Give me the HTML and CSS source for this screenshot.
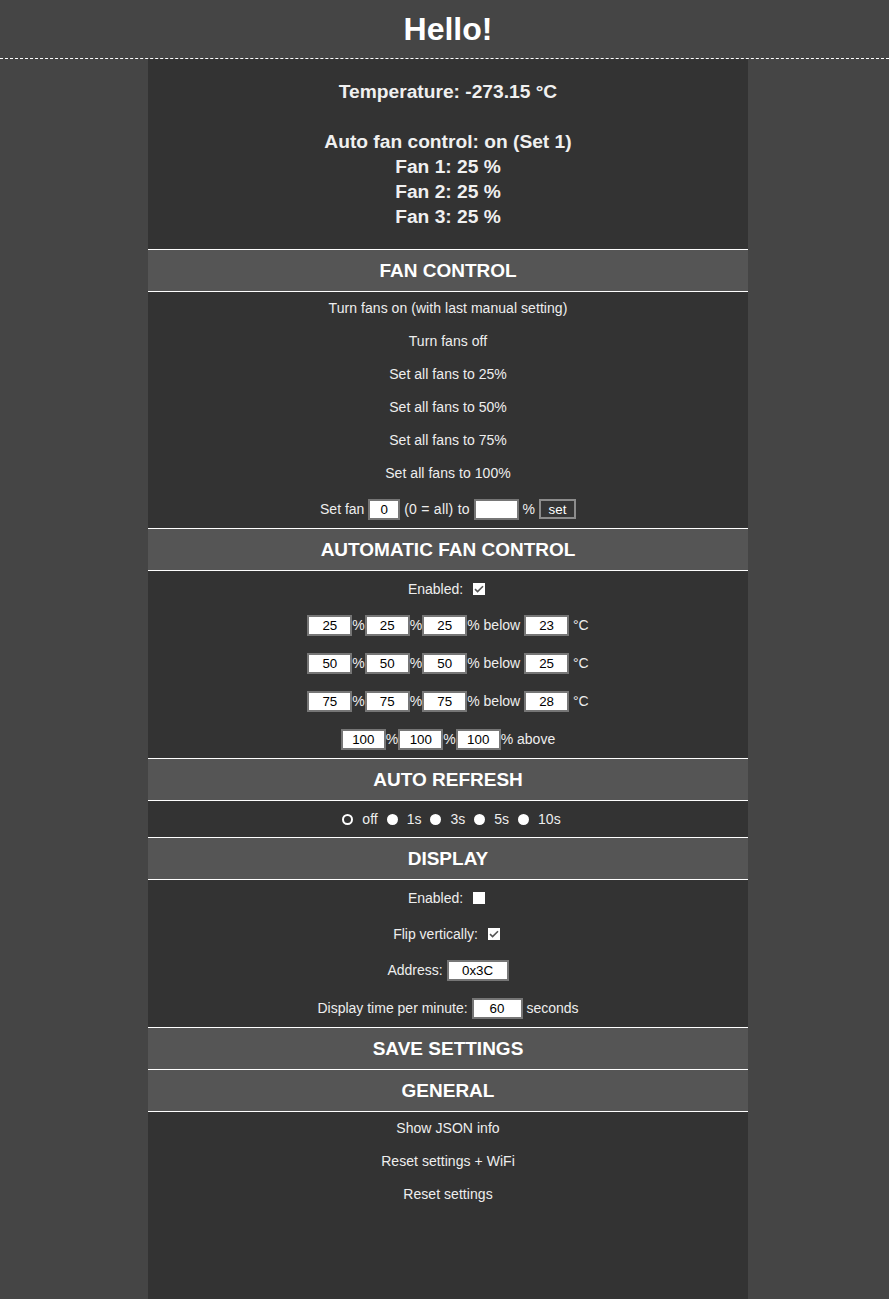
FILE: index.html
```html
<!DOCTYPE html>
<html>
<head>
<meta charset="utf-8">
<title>Hello!</title>
<link rel="stylesheet" href="styles.css">
</head>
<body>
<header class="top">
  <h1 class="title">Hello!</h1>
</header>
<div class="page">
  <main class="main">
    <section class="status">
      <div class="status-line">Temperature: -273.15 °C</div>
      <div class="status-line">&nbsp;</div>
      <div class="status-line">Auto fan control: on (Set 1)</div>
      <div class="status-line">Fan 1: 25 %</div>
      <div class="status-line">Fan 2: 25 %</div>
      <div class="status-line">Fan 3: 25 %</div>
    </section>

    <h2 class="section-title">FAN CONTROL</h2>
    <div class="section-body">
      <a class="link-row">Turn fans on (with last manual setting)</a>
      <a class="link-row">Turn fans off</a>
      <a class="link-row">Set all fans to 25%</a>
      <a class="link-row">Set all fans to 50%</a>
      <a class="link-row">Set all fans to 75%</a>
      <a class="link-row">Set all fans to 100%</a>
      <div class="input-row">Set fan&nbsp;<input class="field w-fan" type="text" value="0">&nbsp;<span class="wide">(0 = all) to</span>&nbsp;<input class="field w-pct" type="text" value="">&nbsp;%&nbsp;<button class="btn">set</button></div>
    </div>

    <h2 class="section-title">AUTOMATIC FAN CONTROL</h2>
    <div class="section-body">
      <div class="check-row">Enabled:&nbsp;<input class="check" type="checkbox" checked></div>
      <div class="input-row"><input class="field w-pct" type="text" value="25">%<input class="field w-pct" type="text" value="25">%<input class="field w-pct" type="text" value="25">% below&nbsp;<input class="field w-pct" type="text" value="23">&nbsp;°C</div>
      <div class="input-row"><input class="field w-pct" type="text" value="50">%<input class="field w-pct" type="text" value="50">%<input class="field w-pct" type="text" value="50">% below&nbsp;<input class="field w-pct" type="text" value="25">&nbsp;°C</div>
      <div class="input-row"><input class="field w-pct" type="text" value="75">%<input class="field w-pct" type="text" value="75">%<input class="field w-pct" type="text" value="75">% below&nbsp;<input class="field w-pct" type="text" value="28">&nbsp;°C</div>
      <div class="input-row"><input class="field w-pct" type="text" value="100">%<input class="field w-pct" type="text" value="100">%<input class="field w-pct" type="text" value="100">% above</div>
    </div>

    <h2 class="section-title">AUTO REFRESH</h2>
    <div class="section-body">
      <div class="radio-row">
        <label class="radio-item"><input class="radio" type="radio" name="refresh" checked>off</label>
        <label class="radio-item"><input class="radio" type="radio" name="refresh">1s</label>
        <label class="radio-item"><input class="radio" type="radio" name="refresh">3s</label>
        <label class="radio-item"><input class="radio" type="radio" name="refresh">5s</label>
        <label class="radio-item"><input class="radio" type="radio" name="refresh">10s</label>
      </div>
    </div>

    <h2 class="section-title">DISPLAY</h2>
    <div class="section-body">
      <div class="check-row check-row-first">Enabled:&nbsp;<input class="check" type="checkbox"></div>
      <div class="check-row">Flip vertically:&nbsp;<input class="check" type="checkbox" checked></div>
      <div class="input-row">Address:&nbsp;<input class="field w-addr" type="text" value="0x3C"></div>
      <div class="input-row">Display time per minute:&nbsp;<input class="field w-time" type="text" value="60">&nbsp;seconds</div>
    </div>

    <h2 class="section-title">SAVE SETTINGS</h2>
    <h2 class="section-title">GENERAL</h2>
    <div class="section-body">
      <a class="link-row">Show JSON info</a>
      <a class="link-row">Reset settings + WiFi</a>
      <a class="link-row">Reset settings</a>
    </div>
  </main>
</div>
</body>
</html>
```
FILE: styles.css
```css
html, body {
  margin: 0;
  padding: 0;
}
body {
  background: #454545;
  color: #eeeeee;
  font-family: "Liberation Sans", Arial, sans-serif;
  font-size: 14px;
}
.top {
  height: 58px;
  border-bottom: 1px dashed #ffffff;
  padding-left: 7px;
  display: flex;
  align-items: center;
  justify-content: center;
}
.title {
  margin: 0;
  font-size: 32px;
  line-height: 36px;
  font-weight: bold;
  color: #ffffff;
}
.page {
  padding-left: 7px;
}
.main {
  width: 600px;
  margin: 0 auto;
  background: #333333;
  min-height: calc(100vh - 59px);
}
.status {
  padding: 20px 0;
  text-align: center;
}
.status-line {
  font-size: 19.2px;
  font-weight: bold;
  line-height: 25px;
  color: #f0f0f0;
}
.section-title {
  margin: 0;
  height: 41px;
  border-top: 1px solid #ffffff;
  border-bottom: 1px solid #ffffff;
  background: #555555;
  color: #ffffff;
  font-size: 19px;
  font-weight: bold;
  display: flex;
  align-items: center;
  justify-content: center;
}
.section-title + .section-title {
  border-top: none;
}
.section-body {
  text-align: center;
}
.link-row {
  display: block;
  padding: 8px 0;
  line-height: 17px;
  color: #eeeeee;
  text-decoration: none;
  letter-spacing: 0.05px;
}
.input-row {
  height: 38px;
  display: flex;
  align-items: center;
  justify-content: center;
  white-space: pre;
}
.wide {
  letter-spacing: 0.25px;
}
.check-row {
  height: 35px;
  display: flex;
  align-items: center;
  justify-content: center;
}
.check-row-first {
  height: 36px;
}
.field {
  box-sizing: border-box;
  height: 21px;
  margin: 0;
  padding: 1px 2px;
  border: 2px solid #767676;
  background: #ffffff;
  color: #000000;
  font-family: "Liberation Sans", Arial, sans-serif;
  font-size: 13.33px;
  text-align: center;
}
.w-fan { width: 32px; }
.w-pct { width: 45px; }
.w-addr { width: 62px; }
.w-time { width: 51px; }
.btn {
  box-sizing: border-box;
  width: 37px;
  height: 20px;
  margin: 0;
  padding: 0;
  border: 2px solid #8c8c8c;
  background: #353535;
  color: #ffffff;
  font-family: "Liberation Sans", Arial, sans-serif;
  font-size: 13.33px;
}
.check {
  -webkit-appearance: none;
  appearance: none;
  width: 12px;
  height: 12px;
  margin: 0 3px 0 6px;
  background: #ffffff;
  border: none;
  border-radius: 0;
}
.check:checked {
  background: #ffffff url("data:image/svg+xml,%3Csvg xmlns='http://www.w3.org/2000/svg' width='12' height='12' viewBox='0 0 12 12'%3E%3Cpath d='M2 6.2 L4.6 8.6 L10 3.2' fill='none' stroke='%23555555' stroke-width='1.6'/%3E%3C/svg%3E") no-repeat center;
}
.radio-row {
  height: 36px;
  padding-left: 7px;
  display: flex;
  align-items: center;
  justify-content: center;
  gap: 9px;
}
.radio-item {
  display: flex;
  align-items: center;
  gap: 9px;
  color: #eeeeee;
}
.radio {
  -webkit-appearance: none;
  appearance: none;
  box-sizing: border-box;
  width: 11px;
  height: 11px;
  margin: 0;
  border-radius: 50%;
  background: #ffffff;
  border: none;
}
.radio:checked {
  background: #333333;
  border: 2px solid #ffffff;
}
```
